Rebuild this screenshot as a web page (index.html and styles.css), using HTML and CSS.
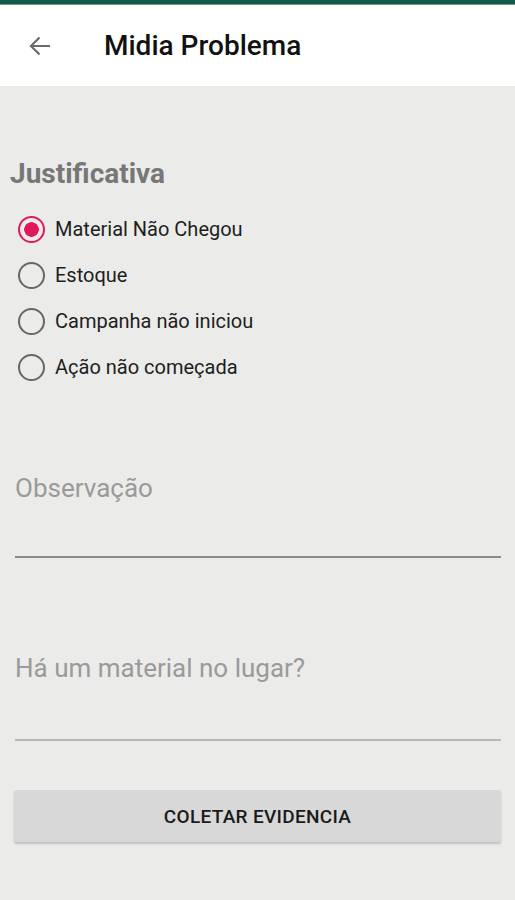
FILE: index.html
```html
<!DOCTYPE html>
<html lang="pt">
<head>
    <meta charset="UTF-8">
    <meta name="viewport" content="width=device-width, initial-scale=1.0">
    <title>Midia Problema</title>
    <link rel="stylesheet" href="styles.css">
</head>
<body>
    <div class="status-bar"></div>
    <header class="toolbar">
        <svg class="back" width="26" height="26" viewBox="0 0 26 26">
            <path d="M23 13H4M12.5 4.5L4 13l8.5 8.5" fill="none" stroke="#6a6a6a" stroke-width="2.2"/>
        </svg>
        <h1>Midia Problema</h1>
    </header>
    <main class="content">
        <h2 class="section-title">Justificativa</h2>
        <div class="radio-group">
            <label class="radio checked"><span class="dot"></span>Material Não Chegou</label>
            <label class="radio"><span class="dot"></span>Estoque</label>
            <label class="radio"><span class="dot"></span>Campanha não iniciou</label>
            <label class="radio"><span class="dot"></span>Ação não começada</label>
        </div>
        <div class="field">
            <div class="placeholder">Observação</div>
            <div class="line"></div>
        </div>
        <div class="field second">
            <div class="placeholder">Há um material no lugar?</div>
            <div class="line light"></div>
        </div>
        <button class="btn">COLETAR EVIDENCIA</button>
    </main>
</body>
</html>
```

FILE: styles.css
```css
body {
    margin: 0;
    font-family: Roboto, "Noto Sans", sans-serif;
    background-color: #ebebe9;
    height: 900px;
    overflow: hidden;
}
.status-bar {
    height: 4px;
    background-color: #0f5a48;
    border-bottom: 1px solid #6f9a8c;
}
.toolbar {
    height: 81px;
    background-color: #fff;
    display: flex;
    align-items: center;
    padding-left: 27px;
}
.toolbar .back {
    margin-right: 51px;
}
.toolbar h1 {
    margin: 0;
    font-size: 28px;
    font-weight: 500;
    color: #111;
}
.content {
    padding: 71px 14px 0 10px;
}
.section-title {
    margin: 0;
    font-size: 28px;
    font-weight: bold;
    color: #777;
    line-height: 34px;
}
.radio-group {
    display: flex;
    flex-direction: column;
    gap: 18px;
    margin-top: 24px;
    padding-left: 8px;
}
.radio {
    display: flex;
    align-items: center;
    font-size: 20px;
    color: #1e1e1e;
    height: 28px;
}
.dot {
    width: 27px;
    height: 27px;
    border: 2.5px solid #666;
    border-radius: 50%;
    margin-right: 10px;
    box-sizing: border-box;
    flex-shrink: 0;
}
.radio.checked .dot {
    border-color: #e0185e;
    background: radial-gradient(circle, #e0185e 0 7px, transparent 7.5px);
}
.field {
    margin-top: 90px;
    padding-left: 5px;
}
.field.second {
    margin-top: 93px;
}
.placeholder {
    font-size: 26px;
    color: #9a9a9a;
    line-height: 34px;
}
.line {
    margin-top: 51px;
    height: 2px;
    background-color: #8a8a8a;
}
.line.light {
    margin-top: 54px;
    background-color: #b8b8b8;
}
.btn {
    display: block;
    width: 487px;
    margin: 49px 0 0 4px;
    height: 52px;
    border: none;
    border-radius: 2px;
    background-color: #d7d8d7;
    box-shadow: 0 2px 2px rgba(0,0,0,0.18);
    font-family: Roboto, sans-serif;
    font-size: 19px;
    font-weight: 500;
    color: #1a1a1a;
    letter-spacing: 0.3px;
}
```
